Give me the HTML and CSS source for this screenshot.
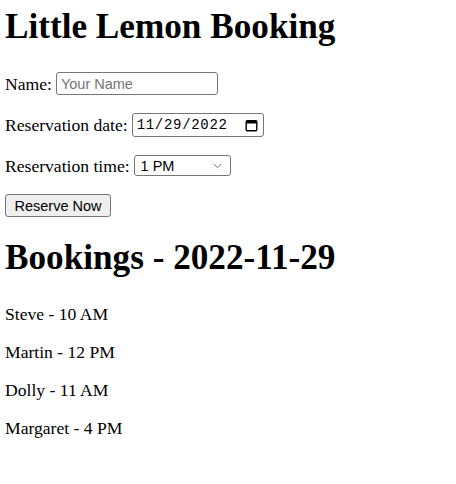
FILE: index.html
```html
<!DOCTYPE html>
<html>
<head>
<meta charset="utf-8">
<link rel="stylesheet" href="styles.css">
</head>
<body>
<h1 class="title top">Little Lemon Booking</h1>
<form class="form">
  <div class="row"><label class="lbl">Name:</label><input class="field name" type="text" placeholder="Your Name"></div>
  <div class="row"><label class="lbl">Reservation date:</label><span class="field date"><span class="digits">11/29/2022</span><svg class="cal" width="13" height="13" viewBox="0 0 13 13"><rect x="1.2" y="1.7" width="10.6" height="10.1" rx="1.2" fill="none" stroke="#000" stroke-width="1.4"/><rect x="1.2" y="1.7" width="10.6" height="2.8" fill="#000"/></svg></span></div>
  <div class="row"><label class="lbl">Reservation time:</label><span class="field select">1 PM<svg class="chev" width="9" height="6" viewBox="0 0 9 6"><path d="M0.8 1l3.7 3.7L8.2 1" fill="none" stroke="#666" stroke-width="0.9"/></svg></span></div>
  <div class="row"><button class="btn" type="button">Reserve Now</button></div>
</form>
<h2 class="title sub">Bookings - 2022-11-29</h2>
<p class="item">Steve - 10 AM</p>
<p class="item">Martin - 12 PM</p>
<p class="item">Dolly - 11 AM</p>
<p class="item">Margaret - 4 PM</p>
</body>
</html>
```
FILE: styles.css
```css
body {
  margin: 5px;
  font-family: "Liberation Serif", serif;
  font-size: 17.6px;
  color: #000;
  background: #fff;
}
.title {
  font-size: 35.2px;
  font-weight: bold;
  line-height: 40px;
  margin: 0;
}
.top { margin-top: 2px; margin-bottom: 25px; }
.sub { margin-top: 21px; margin-bottom: 26px; }
.form { margin: 0; }
.row { margin: 18px 0; display: flex; align-items: center; }
.lbl { line-height: 20px; }
.item { margin: 18px 0; line-height: 20px; }
.field {
  font-family: "Liberation Sans", sans-serif;
  font-size: 14.5px;
  border: 1px solid #767676;
  border-radius: 3px;
  box-sizing: border-box;
  background: #fff;
  margin-left: 4px;
  color: #000;
}
.name { width: 162px; height: 23px; padding: 0 4px; outline: none; }
.name::placeholder { color: #757575; }
.date {
  display: inline-flex; align-items: center; justify-content: space-between;
  width: 132px; height: 24px; padding: 0 5px 0 4px;
}
.digits { font-family: "Liberation Mono", monospace; font-size: 14px; letter-spacing: 0.7px; }
.cal { display: block; }
.select {
  display: inline-flex; align-items: center; justify-content: space-between;
  width: 97px; height: 21px; padding: 0 8px 0 6px;
}
.chev { display: block; }
.btn {
  font-family: "Liberation Sans", sans-serif; font-size: 14.5px; color: #000;
  width: 106px; height: 23px; border: 1px solid #767676; border-radius: 3px;
  background: #efefef; padding: 0;
}
```
